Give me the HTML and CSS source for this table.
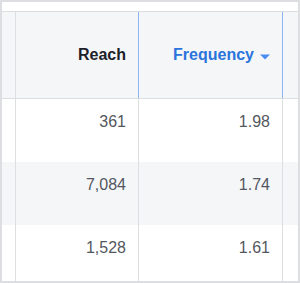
FILE: index.html
```html
<!DOCTYPE html>
<html>
<head>
<meta charset="utf-8">
<link rel="stylesheet" href="styles.css">
</head>
<body>
<div class="frame">
  <div class="topstrip"></div>
  <div class="row head">
    <div class="cell edge"></div>
    <div class="cell reach"><span class="hlabel">Reach</span></div>
    <div class="cell freq active"><span class="hlabel blue">Frequency</span><svg class="caret" width="10" height="6" viewBox="0 0 10 6"><path d="M0 0.5 H10 L5 5.5 Z" fill="#4a8cf0"/></svg></div>
    <div class="cell tail"></div>
  </div>
  <div class="row">
    <div class="cell edge"></div>
    <div class="cell reach num">361</div>
    <div class="cell freq num">1.98</div>
    <div class="cell tail"></div>
  </div>
  <div class="row alt">
    <div class="cell edge"></div>
    <div class="cell reach num">7,084</div>
    <div class="cell freq num">1.74</div>
    <div class="cell tail"></div>
  </div>
  <div class="row">
    <div class="cell edge"></div>
    <div class="cell reach num">1,528</div>
    <div class="cell freq num">1.61</div>
    <div class="cell tail"></div>
  </div>
</div>
</body>
</html>
```
FILE: styles.css
```css
html, body {
  margin: 0;
  padding: 0;
  background: #ffffff;
}
body {
  font-family: "Liberation Sans", Arial, sans-serif;
}
.frame {
  width: 300px;
  height: 283px;
  box-sizing: border-box;
  border: 2px solid #dcdee1;
  overflow: hidden;
  background: #ffffff;
}
.topstrip {
  height: 9px;
  border-bottom: 1px solid #dcdee1;
  background: #ffffff;
}
.row {
  display: flex;
  height: 63px;
}
.row.head {
  height: 86px;
  background: #f5f6f8;
  border-bottom: 1px solid #dcdee1;
}
.row.alt {
  background: #f5f6f8;
}
.cell {
  box-sizing: border-box;
  border-right: 1px solid #dcdee1;
  display: flex;
  justify-content: flex-end;
}
.edge { width: 14px; }
.reach { width: 123px; padding-right: 12px; }
.freq { width: 144px; padding-right: 12px; }
.tail { width: 15px; border-right: none; }
.head .cell {
  align-items: center;
}
.head .freq.active {
  border-left: 1px solid #8fb4f5;
  border-right: 1px solid #8fb4f5;
  margin-left: -1px;
  width: 145px;
}
.hlabel {
  font-size: 16px;
  font-weight: bold;
  color: #1d2129;
  line-height: 18px;
}
.hlabel.blue {
  color: #2a74dc;
}
.caret {
  margin-left: 6px;
  margin-top: 3px;
}
.num {
  padding-top: 14px;
  font-size: 16px;
  line-height: 18px;
  color: #53575e;
}
```
